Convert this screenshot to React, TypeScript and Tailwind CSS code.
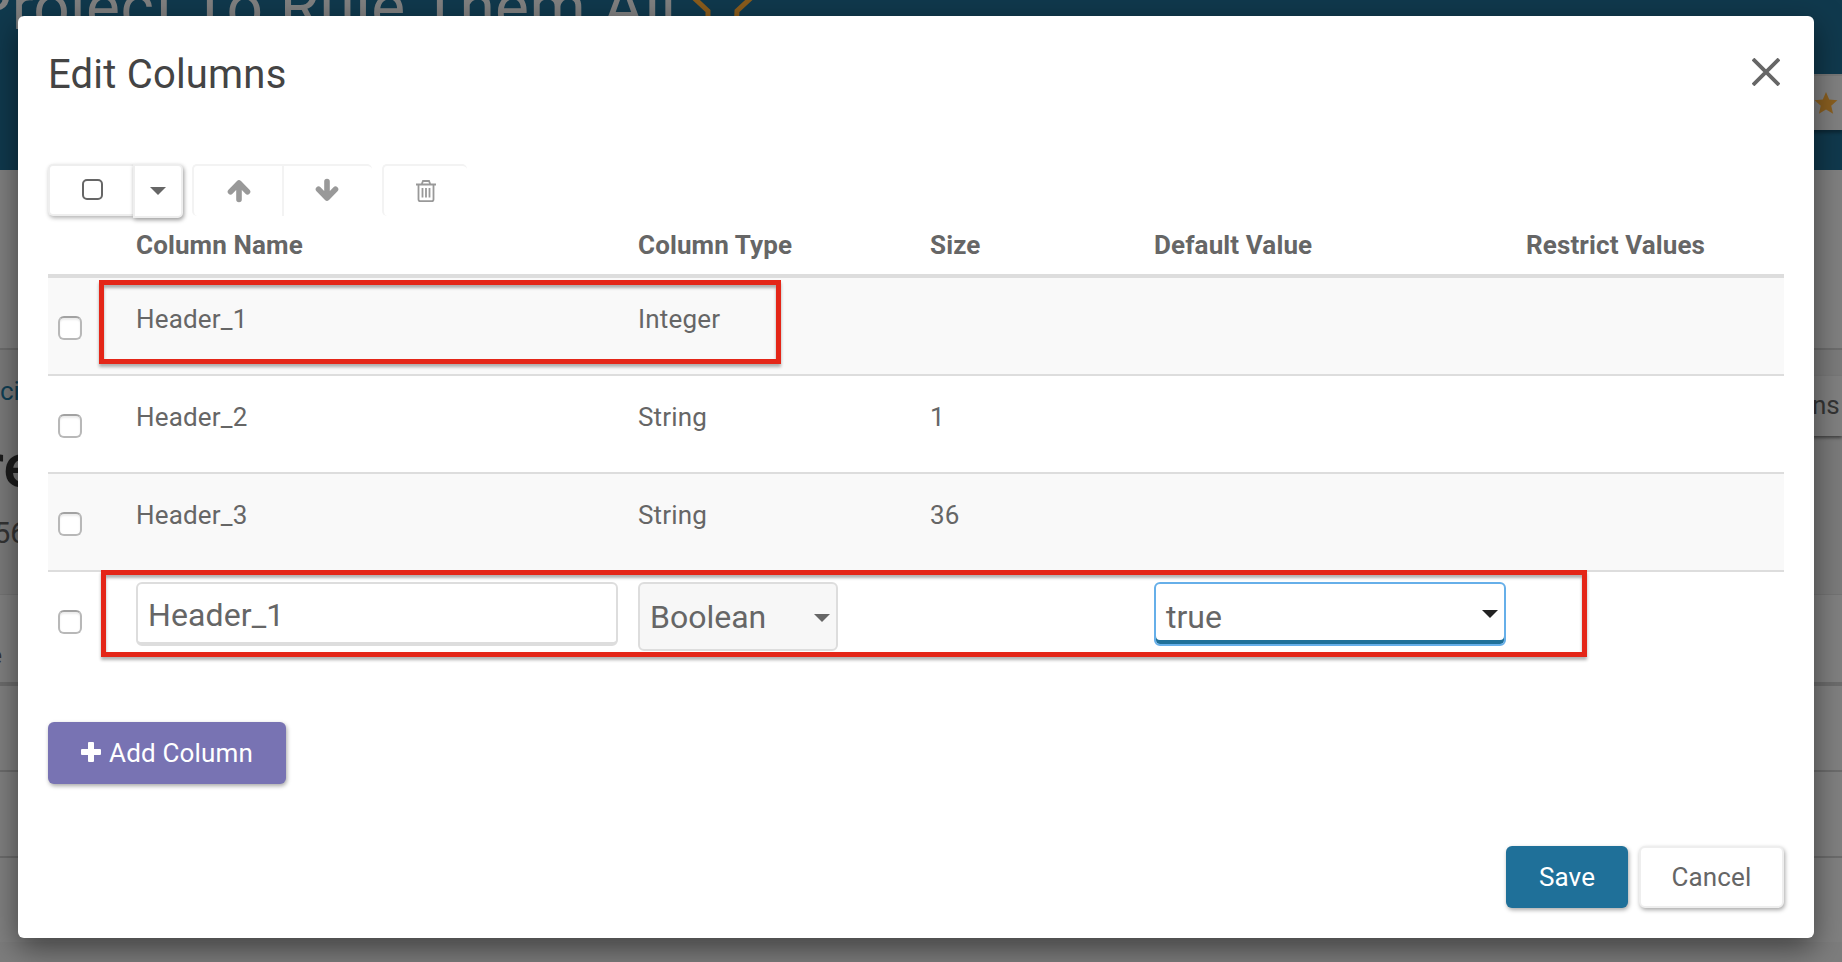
import React from "react";

const font = "font-['Roboto',sans-serif]";
const cols = "grid grid-cols-[88px_502px_292px_224px_372px_258px]";

const rows = [
  { name: "Header_1", type: "Integer", size: "" },
  { name: "Header_2", type: "String", size: "1" },
  { name: "Header_3", type: "String", size: "36" },
];

function Check() {
  return <span className="ml-[10px] mt-[38px] block h-6 w-6 rounded-[6px] border-2 border-[#b8b8b8] border-t-[#a2a2a2] bg-white shadow-[inset_0_2px_2px_rgba(0,0,0,0.08)]" />;
}

function Caret({ className }: { className: string }) {
  return (
    <svg viewBox="0 0 16 8" className={className}>
      <path d="M0 0h16l-8 8z" fill="currentColor" />
    </svg>
  );
}

function Backdrop() {
  return (
    <div className="absolute inset-0 flex flex-col bg-[#808080] text-[#343434]">
      <div className="h-[170px] shrink-0 overflow-hidden bg-[#10394d]">
        <div className="flex h-[74px]">
          <span className="-ml-[29px] -mt-[25px] whitespace-nowrap text-[64px] leading-[66px] tracking-[0.45px] text-[#808080]">Project To Rule Them All</span>
          <svg viewBox="0 0 64 40" className="ml-[14px] h-[40px] w-[64px]" fill="none" stroke="#8a5c1c" strokeWidth="5">
            <path d="M2 -3l15 14v20M61 -3l-15 14-1 20" />
          </svg>
        </div>
        <div className="ml-auto flex h-14 w-[40px] items-center border-t-2 border-[#777] bg-[#808080] pl-[12px] shadow-[0_3px_3px_rgba(0,0,0,0.3)]">
          <svg viewBox="0 0 24 24" className="-mt-[1px] h-[24px] w-[24px] shrink-0" fill="#8a5f20">
            <path d="M12 1l3.2 7.6 8.2.7-6.2 5.400 1.900 8L12 18.400l-7.100 4.300 1.900-8L.6 9.300l8.200-.7z" />
          </svg>
        </div>
      </div>
      <div className="h-[180px] shrink-0 border-b-2 border-[#6d6d6d]" />
      <div className="flex h-[245px] shrink-0 justify-between border-b border-[#747474] bg-[#7b7b7b]">
        <div>
          <div className="mt-[25px] h-[32px] text-[26px] leading-8 text-[#103f55]">ci</div>
          <div className="-ml-[18px] mt-[29px] h-[60px] text-[62px] font-medium leading-[60px] text-[#1c1c1c]">re</div>
          <div className="-ml-[6px] mt-[21px] text-[29px] leading-8">56</div>
        </div>
        <div className="mt-[26px] h-[60px] w-[36px] bg-[#808080] pl-[6px] text-[26px] leading-[58px] shadow-[0_2px_3px_rgba(0,0,0,0.45)]">ns</div>
      </div>
      <div className="h-[91px] shrink-0 border-b-4 border-[#6c6c6c] text-[26px]">
        <div className="-ml-[12px] pt-[41px] font-medium">e</div>
      </div>
      <div className="h-[86px] shrink-0 border-b-2 border-[#6c6c6c]" />
      <div className="h-[86px] shrink-0 border-b-2 border-[#6c6c6c]" />
      <div className="h-[84px] shrink-0" />
      <div className="flex-1 bg-[#7d7d7d]" />
    </div>
  );
}

export default function App() {
  return (
    <div className={`${font} relative h-[962px] w-[1842px] overflow-hidden text-[26px] text-[#666]`}>
      <Backdrop />
      <div className="relative ml-[18px] mt-4 flex h-[922px] w-[1796px] flex-col rounded-[6px] bg-white px-[30px] shadow-[0_10px_30px_rgba(0,0,0,0.5)]">
        <header className="flex h-[148px] justify-between">
          <h1 className="mt-[35px] h-12 text-[40px] leading-[48px] tracking-[0.2px] text-[#444]">Edit Columns</h1>
          <svg viewBox="0 0 28 28" className="mr-1 mt-[42px] h-7 w-7" fill="none" stroke="#666" strokeWidth="3.800">
            <path d="M1 1l26 26M27 1L1 27" />
          </svg>
        </header>

        <div className="flex h-[56px] shrink-0 items-start">
          <div className="flex h-[52px] w-[85px] items-center justify-center rounded-l-[5px] border-2 border-r-0 border-[#eee] bg-white pl-[2px] shadow-[1px_2px_4px_rgba(0,0,0,0.3)]">
            <span className="-mt-[2px] h-[21px] w-[21px] rounded-[5px] border-2 border-[#666]" />
          </div>
          <div className="relative flex h-[54px] w-[50px] items-center justify-center rounded-r-[5px] border-2 border-[#eee] bg-white shadow-[1px_2px_4px_rgba(0,0,0,0.4)]">
            <Caret className="h-2 w-4" />
          </div>
          <div className="ml-[9px] flex h-[52px] w-[180px] rounded-[5px] border-l-2 border-t-2 border-[#f3f3f3] text-[#999]">
            <div className="flex w-[90px] items-center justify-center border-r-2 border-[#f3f3f3] pl-[2px]">
              <svg viewBox="0 0 24 24" className="h-6 w-6" fill="none" stroke="currentColor" strokeWidth="5.600" strokeLinecap="round" strokeLinejoin="round">
                <path d="M12 20.500V5M3.500 12.800L12 4l8.500 8.800" />
              </svg>
            </div>
            <div className="flex flex-1 items-center justify-center pr-[2px]">
              <svg viewBox="0 0 24 24" className="-mt-[2px] h-6 w-6" fill="none" stroke="currentColor" strokeWidth="5.600" strokeLinecap="round" strokeLinejoin="round">
                <path d="M12 3.500V19M3.500 11.200L12 20l8.500-8.800" />
              </svg>
            </div>
          </div>
          <div className="ml-[10px] flex h-[52px] w-[85px] items-center justify-center rounded-[5px] border-l-2 border-t-2 border-[#f3f3f3] text-[#999]">
            <svg viewBox="0 0 20 22" className="-mt-[1px] h-[22px] w-[20px]" fill="none" stroke="currentColor" strokeWidth="1.800">
              <path d="M0 4.500h20M5.800 4l1.200-3h6l1.200 3M2.500 5v14.500q0 1.700 1.700 1.700h11.600q1.700 0 1.700-1.700V5M6.500 8v9.500M10 8v9.500M13.500 8v9.500" />
            </svg>
          </div>
        </div>

        <div className={`${cols} h-[58px] shrink-0 border-b-4 border-[#ddd] font-bold tracking-[0.12px]`}>
          <span />
          {["Column Name", "Column Type", "Size", "Default Value", "Restrict Values"].map((h) => (
            <span key={h} className="pt-[9px] leading-8">{h}</span>
          ))}
        </div>
        {rows.map((r, i) => (
          <div key={r.name} className={`${cols} h-[98px] shrink-0 border-b-2 border-[#ddd] tracking-[0.18px] ${i % 2 === 0 ? "bg-[#f9f9f9]" : "bg-white"}`}>
            <Check />
            <span className="pt-[25px] leading-8">{r.name}</span>
            <span className="pt-[25px] leading-8">{r.type}</span>
            <span className="pt-[25px] leading-8">{r.size}</span>
          </div>
        ))}
        <div className={`${cols} h-[98px] shrink-0 text-[32px]`}>
          <Check />
          <div className="mt-[10px] h-16 w-[482px] rounded-[6px] border-2 border-b-4 border-[#ddd] bg-white pl-[10px] leading-[62px] tracking-[0.1px]">Header_1</div>
          <div className="mt-[10px] flex h-[69px] w-[200px] items-center justify-between rounded-[6px] border-2 border-[#ddd] bg-[#f7f7f7] pl-[10px] pr-[6px]">
            Boolean
            <Caret className="mt-[3px] h-2 w-4" />
          </div>
          <span />
          <div className="mt-[10px] flex h-16 w-[352px] items-center justify-between rounded-[6px] border-2 border-[#66afe9] bg-white pl-[10px] pr-[6px] shadow-[inset_0_-4px_0_#1f7099]">
            <span className="pt-[6px]">true</span>
            <Caret className="h-2 w-4 text-[#222]" />
          </div>
        </div>

        <button className="mt-[52px] flex h-[62px] w-[238px] shrink-0 items-center justify-center gap-[8px] rounded-[6px] bg-[#7873b3] tracking-[0.15px] text-white shadow-[1px_2px_4px_rgba(0,0,0,0.35)]">
          <svg viewBox="0 0 20 20" className="-mt-[2px] h-5 w-5" fill="currentColor">
            <path d="M8 0h4q1 0 1 1v6h6q1 0 1 1v4q0 1-1 1h-6v6q0 1-1 1H8q-1 0-1-1v-6H1q-1 0-1-1V8q0-1 1-1h6V1q0-1 1-1z" />
          </svg>
          Add Column
        </button>
        <footer className="mt-[62px] flex shrink-0 justify-end gap-[11px]">
          <button className="h-[62px] w-[122px] rounded-[6px] bg-[#1f7099] tracking-[0.15px] text-white shadow-[1px_2px_4px_rgba(0,0,0,0.35)]">Save</button>
          <button className="h-[62px] w-[145px] rounded-[6px] border-2 border-[#eee] bg-white tracking-[0.15px] shadow-[1px_2px_4px_rgba(0,0,0,0.35)]">Cancel</button>
        </footer>
      </div>
      <div className="absolute left-[99px] top-[280px] h-[84px] w-[682px] border-5 border-[#e42618] shadow-[0_3px_3px_rgba(0,0,0,0.3),inset_0_3px_3px_rgba(0,0,0,0.3)]" />
      <div className="absolute left-[101px] top-[570px] h-[87px] w-[1486px] border-5 border-[#e42618] shadow-[0_3px_3px_rgba(0,0,0,0.3),inset_0_3px_3px_rgba(0,0,0,0.3)]" />
    </div>
  );
}
